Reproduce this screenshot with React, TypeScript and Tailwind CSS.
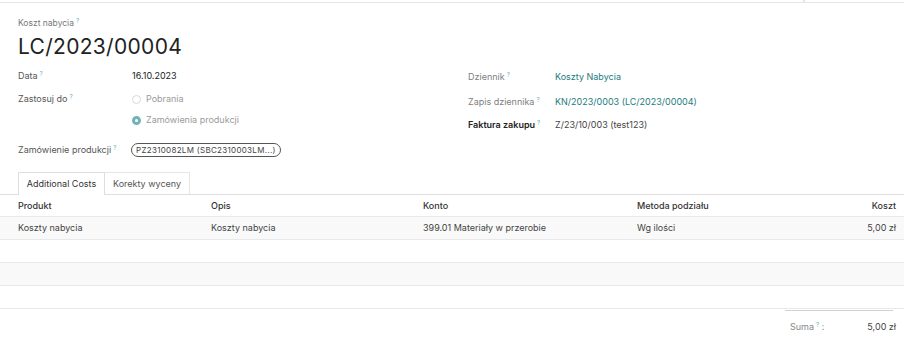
import React from "react";

const Q = () => (
  <span className="relative -top-[3px] ml-[2px] text-[6px] text-[#7fb8c4] font-medium leading-none">?</span>
);

const Radio = ({ checked, label }: { checked?: boolean; label: string }) => (
  <div className="flex items-center gap-[5px]">
    {checked ? (
      <span className="w-[9px] h-[9px] rounded-full border-[3px] border-[#72b3b7] bg-white box-border" />
    ) : (
      <span className="w-[9px] h-[9px] rounded-full border border-[#d8d8d8] bg-white box-border" />
    )}
    <span className="text-[#9a9a9a]">{label}</span>
  </div>
);

export default function App() {
  const cols = "grid grid-cols-[211px_212px_214px_1fr_auto]";
  return (
    <div
      className="w-[904px] h-[344px] bg-white overflow-hidden text-[9px] text-[#333]"
      style={{ fontFamily: "Inter, 'Noto Sans', sans-serif" }}
    >
      {/* top strip */}
      <div className="flex h-[3px]">
        <div className="w-[803px] border-b border-[#e6e6e6]" />
        <div className="w-[2px] bg-[#e6e6e6]" />
        <div className="flex-1 border-b border-[#e6e6e6]" />
      </div>

      <div className="pl-[18px] pt-[14px]">
        <div className="text-[8.5px] text-[#777] leading-[12px] h-[12px]">
          Koszt nabycia<Q />
        </div>
        <div className="text-[21px] leading-[24px] text-[#222] mt-[6px] tracking-[0.3px]">LC/2023/00004</div>

        <div className="flex mt-[6px]">
          {/* left group */}
          <div className="w-[450px]">
            <div className="flex h-[22px] items-center">
              <div className="w-[114px] text-[#555]">Data<Q /></div>
              <div className="text-[#222]">16.10.2023</div>
            </div>
            <div className="flex h-[24px] items-center">
              <div className="w-[114px] text-[#555]">Zastosuj do<Q /></div>
              <Radio label="Pobrania" />
            </div>
            <div className="flex h-[18px] items-center">
              <div className="w-[114px]" />
              <Radio checked label="Zamówienia produkcji" />
            </div>
            <div className="flex h-[20px] items-center mt-[11px]">
              <div className="w-[113px] text-[#555]">Zamówienie produkcji<Q /></div>
              <div className="h-[14px] px-[4px] flex items-center rounded-full border border-[#555] text-[8px] text-[#444] tracking-[0.3px]">
                PZ2310082LM (SBC2310003LM...)
              </div>
            </div>
          </div>
          {/* right group */}
          <div>
            <div className="flex h-[24px] items-center">
              <div className="w-[87px] text-[#808080]">Dziennik<Q /></div>
              <div className="text-[#1d7b80]">Koszty Nabycia</div>
            </div>
            <div className="flex h-[26px] items-center">
              <div className="w-[87px] text-[#808080]">Zapis dziennika<Q /></div>
              <div className="text-[#1d7b80]">KN/2023/0003 (LC/2023/00004)</div>
            </div>
            <div className="flex h-[20px] items-center">
              <div className="w-[87px] text-[#222] font-semibold">Faktura zakupu<Q /></div>
              <div className="text-[#444]">Z/23/10/003 (test123)</div>
            </div>
          </div>
        </div>
      </div>

      {/* tabs */}
      <div className="flex mt-[12px] border-b border-[#dedede] h-[23px]">
        <div className="w-[18px]" />
        <div className="w-[87px] border border-b-0 border-[#dedede] bg-white mb-[-1px] flex items-center justify-center text-[#333]">
          Additional Costs
        </div>
        <div className="w-[85px] border-t border-r border-[#e6e6e6] flex items-center justify-center text-[#555]">
          Korekty wyceny
        </div>
      </div>

      {/* table */}
      <div className={`${cols} h-[22px] items-center border-b border-[#e8e8e8] font-medium text-[#333]`}>
        <div className="pl-[18px]">Produkt</div>
        <div>Opis</div>
        <div>Konto</div>
        <div>Metoda podziału</div>
        <div className="pr-[8px] text-right">Koszt</div>
      </div>
      <div className={`${cols} h-[23px] items-center border-b border-[#e8e8e8] bg-[#f9f9f9] text-[#444]`}>
        <div className="pl-[18px]">Koszty nabycia</div>
        <div>Koszty nabycia</div>
        <div>399.01 Materiały w przerobie</div>
        <div>Wg ilości</div>
        <div className="pr-[8px] text-right">5,00 zł</div>
      </div>
      <div className="h-[23px] border-b border-[#e8e8e8]" />
      <div className="h-[23px] border-b border-[#e8e8e8] bg-[#f9f9f9]" />
      <div className="h-[23px] border-b border-[#e8e8e8]" />

      {/* totals */}
      <div className="flex justify-end pr-[11px] mt-[1px]">
        <div className="w-[108px] border-t border-[#cfd2d6] pt-[9px] flex justify-between items-center">
          <span className="pl-[5px] text-[#888]">Suma<Q /> :</span>
          <span className="text-[#444] relative left-[3px]">5,00 zł</span>
        </div>
      </div>
    </div>
  );
}
